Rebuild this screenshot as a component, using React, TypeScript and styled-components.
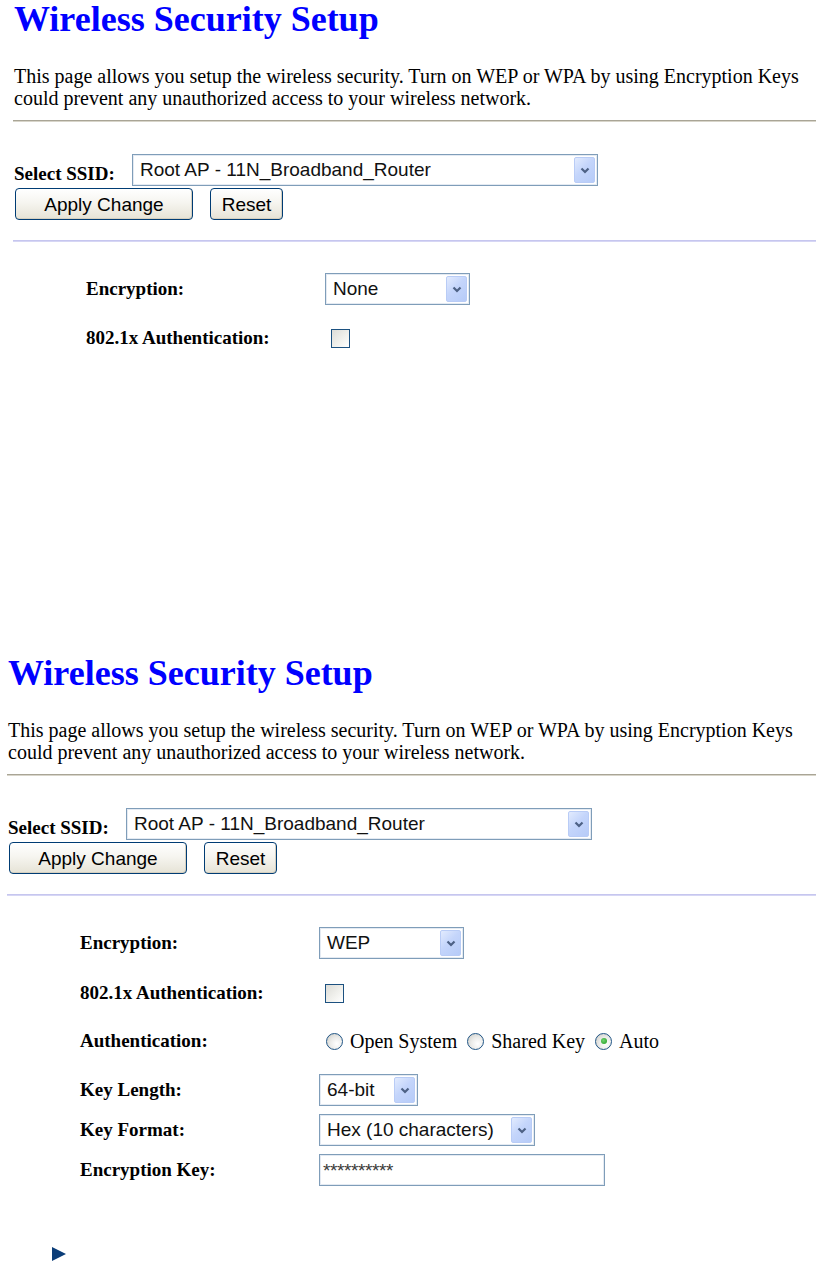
import React from 'react';
import styled, { createGlobalStyle } from 'styled-components';

const serif = `"Liberation Serif", "Times New Roman", serif`;
const sans = `"Liberation Sans", Arial, sans-serif`;

const GlobalStyle = createGlobalStyle`
  body {
    margin: 0;
    background: #fff;
  }
`;

interface RowSpec {
  label: string;
  gap: number;
  control: React.ReactNode;
}

const Page = styled.div`
  display: flex;
  flex-direction: column;
  gap: 300px;
`;

const Screen = styled.section<{ $inset: number }>`
  padding-left: ${p => p.$inset}px;
`;

const Title = styled.h1`
  margin: 0;
  font: bold 36px/38px ${serif};
  color: #0000ff;
  white-space: nowrap;
`;

const Intro = styled.p`
  margin: 27px 0 0;
  font: 20px/22px ${serif};
  color: #000;
  white-space: nowrap;
`;

const Rule = styled.hr<{ $tone: 'gray' | 'lavender'; $space: number }>`
  margin: ${p => p.$space}px 0 0 -1px;
  height: 0;
  border: none;
  border-top: 1px solid ${p => (p.$tone === 'gray' ? '#a9a596' : '#c6c6ef')};
  border-bottom: 1px solid ${p => (p.$tone === 'gray' ? '#d8d5ca' : '#d6d6f4')};
`;

const SsidRow = styled.div`
  margin-top: 32px;
  display: flex;
  align-items: flex-end;
  height: 32px;
`;

const Label = styled.span<{ $width: number }>`
  width: ${p => p.$width}px;
  flex: none;
  font: bold 19px/22px ${serif};
  color: #000;
  white-space: nowrap;
  padding-bottom: 1px;
`;

const ButtonRow = styled.div`
  margin: 2px 0 0 1px;
  display: flex;
  gap: 17px;
`;

const Button = styled.button<{ $width: number }>`
  width: ${p => p.$width}px;
  height: 32px;
  padding: 0;
  border: 1px solid #003c74;
  border-radius: 4px;
  background: linear-gradient(#ffffff 0%, #f6f5f0 45%, #e6e3d6 100%);
  box-shadow: inset -1px -1px 0 #d6d0c0;
  font: 19px/1 ${sans};
  color: #000;
  cursor: pointer;
`;

const Form = styled.div`
  margin-top: 31px;
  display: flex;
  flex-direction: column;
`;

const Row = styled.div<{ $gap: number }>`
  margin-top: ${p => p.$gap}px;
  height: 32px;
  padding-left: 72px;
  display: grid;
  grid-template-columns: 239px auto;
  align-items: center;
`;

const FieldLabel = styled.span`
  font: bold 19px/22px ${serif};
  color: #000;
  white-space: nowrap;
`;

const SelectBox = styled.div<{ $width: number }>`
  width: ${p => p.$width}px;
  height: 32px;
  box-sizing: border-box;
  border: 1px solid #7f9db9;
  box-shadow: inset 0 0 0 1px #e4eaf2;
  background: #fff;
  display: flex;
  align-items: center;
  padding: 0 2px 0 7px;
`;

const SelectValue = styled.span`
  flex: 1;
  font: 19px/24px ${sans};
  color: #111;
  white-space: nowrap;
`;

const ArrowButton = styled.span`
  width: 21px;
  height: 26px;
  box-sizing: border-box;
  border: 1px solid #b9ccf6;
  border-radius: 2px;
  background: linear-gradient(135deg, #e2ebfe 0%, #c4d5fb 45%, #b6cbf8 100%);
  display: flex;
  align-items: center;
  justify-content: center;
`;

const Check = styled.span`
  margin-left: 6px;
  width: 19px;
  height: 19px;
  box-sizing: border-box;
  border: 1px solid #1c5180;
  background: linear-gradient(135deg, #dcdcd7 0%, #f2f2ee 60%, #ffffff 100%);
  display: block;
`;

const RadioGroup = styled.div`
  margin-left: 7px;
  display: flex;
  align-items: center;
  font: 20px/22px ${serif};
  color: #000;
  white-space: nowrap;
`;

const RadioOption = styled.label`
  display: flex;
  align-items: center;
  gap: 7px;
  margin-right: 10px;
`;

const RadioDot = styled.span<{ $checked?: boolean }>`
  width: 17px;
  height: 17px;
  box-sizing: border-box;
  border-radius: 50%;
  border: 1px solid #1f5485;
  background: radial-gradient(circle at 65% 65%, #ffffff 0%, #ececea 45%, #c9c9c2 100%);
  display: flex;
  align-items: center;
  justify-content: center;

  &::after {
    content: '';
    display: ${p => (p.$checked ? 'block' : 'none')};
    width: 6px;
    height: 6px;
    border-radius: 50%;
    background: radial-gradient(circle at 40% 40%, #6fd36f, #1f9a1f);
  }
`;

const TextBox = styled.div`
  width: 286px;
  height: 32px;
  box-sizing: border-box;
  border: 1px solid #7f9db9;
  box-shadow: inset 0 0 0 1px #e4eaf2;
  padding: 0 3px;
  display: flex;
  align-items: center;
  font: 19px/1 ${sans};
  color: #3a3a3a;
  letter-spacing: -0.4px;
`;

const Bullet = styled.div`
  margin: 61px 0 0 44px;
  width: 14px;
  height: 14px;
`;

const Select: React.FC<{ value: string; width: number }> = ({ value, width }) => (
  <SelectBox $width={width}>
    <SelectValue>{value}</SelectValue>
    <ArrowButton>
      <svg width="10" height="7" viewBox="0 0 10 7">
        <path d="M1.5 1.5 L5 5 L8.5 1.5" fill="none" stroke="#4d6185" strokeWidth="2.2" />
      </svg>
    </ArrowButton>
  </SelectBox>
);

const Radio: React.FC<{ text: string; checked?: boolean }> = ({ text, checked }) => (
  <RadioOption>
    <RadioDot $checked={checked} />
    {text}
  </RadioOption>
);

const SecurityScreen: React.FC<{ inset: number; rows: RowSpec[]; bullet?: boolean }> = ({
  inset,
  rows,
  bullet,
}) => (
  <Screen $inset={inset}>
    <Title>Wireless Security Setup</Title>
    <Intro>
      This page allows you setup the wireless security. Turn on WEP or WPA by using Encryption Keys
      <br />
      could prevent any unauthorized access to your wireless network.
    </Intro>
    <Rule $tone="gray" $space={11} />
    <SsidRow>
      <Label $width={118}>Select SSID:</Label>
      <Select value="Root AP - 11N_Broadband_Router" width={466} />
    </SsidRow>
    <ButtonRow>
      <Button $width={178}>Apply Change</Button>
      <Button $width={73}>Reset</Button>
    </ButtonRow>
    <Rule $tone="lavender" $space={20} />
    <Form>
      {rows.map((row, i) => (
        <Row key={row.label} $gap={i === 0 ? 0 : row.gap}>
          <FieldLabel>{row.label}</FieldLabel>
          {row.control}
        </Row>
      ))}
    </Form>
    {bullet && (
      <Bullet>
        <svg width="14" height="14" viewBox="0 0 14 14">
          <polygon points="0,0 14,7 0,14" fill="#0b3d78" />
        </svg>
      </Bullet>
    )}
  </Screen>
);

const noneRows: RowSpec[] = [
  { label: 'Encryption:', gap: 0, control: <Select value="None" width={145} /> },
  { label: '802.1x Authentication:', gap: 17, control: <Check /> },
];

const wepRows: RowSpec[] = [
  { label: 'Encryption:', gap: 0, control: <Select value="WEP" width={145} /> },
  { label: '802.1x Authentication:', gap: 18, control: <Check /> },
  {
    label: 'Authentication:',
    gap: 16,
    control: (
      <RadioGroup>
        <Radio text="Open System" />
        <Radio text="Shared Key" />
        <Radio text="Auto" checked />
      </RadioGroup>
    ),
  },
  { label: 'Key Length:', gap: 17, control: <Select value="64-bit" width={99} /> },
  { label: 'Key Format:', gap: 8, control: <Select value="Hex (10 characters)" width={216} /> },
  { label: 'Encryption Key:', gap: 8, control: <TextBox>**********</TextBox> },
];

const App: React.FC = () => (
  <>
    <GlobalStyle />
    <Page>
      <SecurityScreen inset={14} rows={noneRows} />
      <SecurityScreen inset={8} rows={wepRows} bullet />
    </Page>
  </>
);

export default App;
